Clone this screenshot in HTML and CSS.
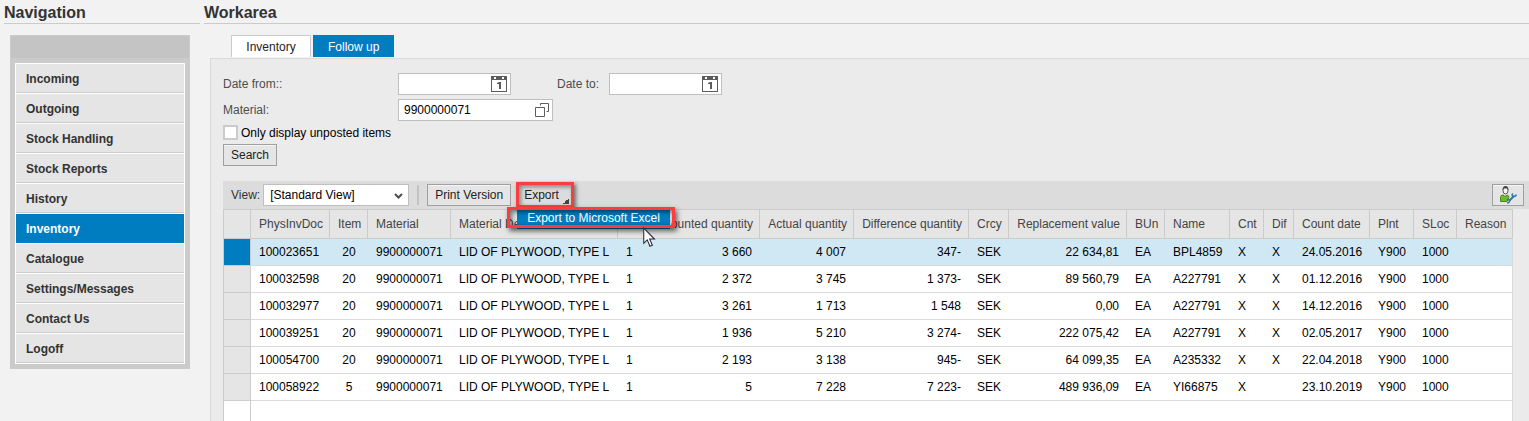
FILE: index.html
```html
<!DOCTYPE html>
<html lang="en">
<head>
    <meta charset="UTF-8">
    <meta name="viewport" content="width=device-width, initial-scale=1.0">
    <title>Inventory - Follow up</title>
    <link rel="stylesheet" href="styles.css">
</head>
<body>
    <div class="page">
        <aside class="navigation">
            <h2 class="heading">Navigation</h2>
            <nav class="nav-box">
                <div class="nav-top"></div>
                <ul class="nav-list">
                    <li><a href="#">Incoming</a></li>
                    <li><a href="#">Outgoing</a></li>
                    <li><a href="#">Stock Handling</a></li>
                    <li><a href="#">Stock Reports</a></li>
                    <li><a href="#">History</a></li>
                    <li><a href="#" class="active">Inventory</a></li>
                    <li><a href="#">Catalogue</a></li>
                    <li><a href="#">Settings/Messages</a></li>
                    <li><a href="#">Contact Us</a></li>
                    <li><a href="#">Logoff</a></li>
                </ul>
            </nav>
        </aside>

        <main class="workarea">
            <h2 class="heading">Workarea</h2>
            <div class="tabs">
                <button type="button" class="tab">Inventory</button>
                <button type="button" class="tab selected">Follow up</button>
            </div>

            <section class="panel">
                <form class="search-form">
                    <div class="form-row">
                        <label class="label-first" for="date-from">Date from::</label>
                        <div class="field field-date">
                            <input type="text" id="date-from">
                            <button type="button" class="field-icon" aria-label="Pick date from">
                                <svg width="16" height="16" viewBox="0 0 16 16">
                                    <path fill="#5c5c5c" fill-rule="evenodd" d="M0 0h16v16H0zM1 4v11h14V4zM3 1v2h2V1zM11 1v2h2V1z"/>
                                    <path fill="#5c5c5c" d="M6 7l2-1h2v7H8V8H6z"/>
                                </svg>
                            </button>
                        </div>
                        <label class="label-second" for="date-to">Date to:</label>
                        <div class="field field-date">
                            <input type="text" id="date-to">
                            <button type="button" class="field-icon" aria-label="Pick date to">
                                <svg width="16" height="16" viewBox="0 0 16 16">
                                    <path fill="#5c5c5c" fill-rule="evenodd" d="M0 0h16v16H0zM1 4v11h14V4zM3 1v2h2V1zM11 1v2h2V1z"/>
                                    <path fill="#5c5c5c" d="M6 7l2-1h2v7H8V8H6z"/>
                                </svg>
                            </button>
                        </div>
                    </div>
                    <div class="form-row">
                        <label class="label-first" for="material">Material:</label>
                        <div class="field field-material">
                            <input type="text" id="material" value="9900000071">
                            <button type="button" class="field-icon" aria-label="Value help">
                                <svg width="16" height="16" viewBox="0 0 16 16" fill="none" stroke="#5c5c5c">
                                    <path d="M2.500 5.500h9v9h-9zM7.500 3.500v-2h8v8h-2"/>
                                </svg>
                            </button>
                        </div>
                    </div>
                    <div class="check-row">
                        <input type="checkbox" id="unposted">
                        <label for="unposted">Only display unposted items</label>
                    </div>
                    <button type="button" class="btn">Search</button>
                </form>

                <div class="toolbar">
                    <label for="view">View:</label>
                    <div class="select-wrap">
                        <select id="view">
                            <option>[Standard View]</option>
                        </select>
                        <svg class="chevron" width="9" height="6" viewBox="0 0 9 6" fill="none" stroke="#4d4d4d" stroke-width="2">
                            <path d="M1 1l3.500 3.500L8 1"/>
                        </svg>
                    </div>
                    <span class="separator"></span>
                    <button type="button" class="btn">Print Version</button>
                    <div class="export">
                        <button type="button" class="export-btn">Export</button>
                        <div class="export-menu">
                            <button type="button" class="menu-item">Export to Microsoft Excel</button>
                        </div>
                        <svg class="cursor" width="14" height="21" viewBox="0 0 13 20">
                            <path fill="#fff" stroke="#26263a" d="M1.500 1v14.500l3.300-3.200 2.600 6 2.300-1-2.600-5.800h4.600z"/>
                        </svg>
                    </div>
                    <button type="button" class="btn settings" aria-label="Settings">
                        <svg width="18" height="18" viewBox="0 0 18 18">
                            <path fill="#76b82a" stroke="#3f8a1a" d="M1.500 15.500v-4c0-1.500 1-2.500 2.500-2.500l2 1.500L8.500 9l1.500 2-2 4.500z"/>
                            <ellipse cx="6.500" cy="4.500" rx="2.500" ry="3.500" fill="#f4f4f4" stroke="#555"/>
                            <path fill="#444" d="M3.500 4.500C3.500 1.500 4.500 0 6.500 0s3 1.500 3 4.500L8.500 2.500h-4z"/>
                            <path fill="none" stroke="#2a78b0" stroke-width="2" d="M10 15l5-5"/>
                            <path fill="none" stroke="#2a78b0" stroke-width="1.500" d="M14 7.500c-1.500 1-1 3 .5 3s2.500-.5 3-2M8 14c1.500-1 3 0 2.500 1.500S9 17 8 17"/>
                        </svg>
                    </button>
                </div>

                <table class="grid">
                    <colgroup>
                        <col class="c-select">
                        <col class="c-doc">
                        <col class="c-item">
                        <col class="c-material">
                        <col class="c-desc">
                        <col class="c-type">
                        <col class="c-counted">
                        <col class="c-actual">
                        <col class="c-diff">
                        <col class="c-crcy">
                        <col class="c-value">
                        <col class="c-bun">
                        <col class="c-name">
                        <col class="c-cnt">
                        <col class="c-dif">
                        <col class="c-date">
                        <col class="c-plnt">
                        <col class="c-sloc">
                        <col class="c-reason">
                    </colgroup>
                    <thead>
                        <tr>
                            <th></th>
                            <th>PhysInvDoc</th>
                            <th>Item</th>
                            <th>Material</th>
                            <th>Material Desc</th>
                            <th></th>
                            <th class="num">Counted quantity</th>
                            <th class="num">Actual quantity</th>
                            <th class="num">Difference quantity</th>
                            <th>Crcy</th>
                            <th class="num">Replacement value</th>
                            <th>BUn</th>
                            <th>Name</th>
                            <th>Cnt</th>
                            <th>Dif</th>
                            <th>Count date</th>
                            <th>Plnt</th>
                            <th>SLoc</th>
                            <th>Reason</th>
                        </tr>
                    </thead>
                    <tbody>
                        <tr class="selected">
                            <td></td><td>100023651</td><td class="mid">20</td><td>9900000071</td><td>LID OF PLYWOOD, TYPE L</td><td>1</td>
                            <td class="num">3 660</td><td class="num">4 007</td><td class="num">347-</td><td>SEK</td><td class="num">22 634,81</td>
                            <td>EA</td><td>BPL4859</td><td>X</td><td>X</td><td>24.05.2016</td><td>Y900</td><td>1000</td><td></td>
                        </tr>
                        <tr>
                            <td></td><td>100032598</td><td class="mid">20</td><td>9900000071</td><td>LID OF PLYWOOD, TYPE L</td><td>1</td>
                            <td class="num">2 372</td><td class="num">3 745</td><td class="num">1 373-</td><td>SEK</td><td class="num">89 560,79</td>
                            <td>EA</td><td>A227791</td><td>X</td><td>X</td><td>01.12.2016</td><td>Y900</td><td>1000</td><td></td>
                        </tr>
                        <tr>
                            <td></td><td>100032977</td><td class="mid">20</td><td>9900000071</td><td>LID OF PLYWOOD, TYPE L</td><td>1</td>
                            <td class="num">3 261</td><td class="num">1 713</td><td class="num">1 548</td><td>SEK</td><td class="num">0,00</td>
                            <td>EA</td><td>A227791</td><td>X</td><td>X</td><td>14.12.2016</td><td>Y900</td><td>1000</td><td></td>
                        </tr>
                        <tr>
                            <td></td><td>100039251</td><td class="mid">20</td><td>9900000071</td><td>LID OF PLYWOOD, TYPE L</td><td>1</td>
                            <td class="num">1 936</td><td class="num">5 210</td><td class="num">3 274-</td><td>SEK</td><td class="num">222 075,42</td>
                            <td>EA</td><td>A227791</td><td>X</td><td>X</td><td>02.05.2017</td><td>Y900</td><td>1000</td><td></td>
                        </tr>
                        <tr>
                            <td></td><td>100054700</td><td class="mid">20</td><td>9900000071</td><td>LID OF PLYWOOD, TYPE L</td><td>1</td>
                            <td class="num">2 193</td><td class="num">3 138</td><td class="num">945-</td><td>SEK</td><td class="num">64 099,35</td>
                            <td>EA</td><td>A235332</td><td>X</td><td>X</td><td>22.04.2018</td><td>Y900</td><td>1000</td><td></td>
                        </tr>
                        <tr>
                            <td></td><td>100058922</td><td class="mid">5</td><td>9900000071</td><td>LID OF PLYWOOD, TYPE L</td><td>1</td>
                            <td class="num">5</td><td class="num">7 228</td><td class="num">7 223-</td><td>SEK</td><td class="num">489 936,09</td>
                            <td>EA</td><td>YI66875</td><td>X</td><td></td><td>23.10.2019</td><td>Y900</td><td>1000</td><td></td>
                        </tr>
                        <tr class="empty">
                            <td></td><td colspan="18"></td>
                        </tr>
                    </tbody>
                </table>
            </section>
        </main>
    </div>
</body>
</html>
```

FILE: styles.css
```css
*, *::after {
    box-sizing: border-box;
}

html, body {
    margin: 0;
    height: 100%;
    overflow: hidden;
}

body {
    background-color: #f2f2f2;
    font-family: "Liberation Sans", Arial, sans-serif;
    font-size: 12px;
    color: #333;
}

button, input, select {
    font: inherit;
    color: inherit;
    margin: 0;
    padding: 0;
    border: 0;
    border-radius: 0;
}

.page {
    display: flex;
    gap: 4px;
    height: 100%;
    padding-left: 4px;
}

.navigation {
    width: 196px;
    flex: none;
}

.workarea {
    display: flex;
    flex-direction: column;
    flex: 1;
    min-width: 0;
}

.heading {
    flex: none;
    height: 24px;
    margin: 0 0 11px;
    padding-top: 4px;
    border-bottom: 1px solid #cbcbcb;
    font-size: 16px;
    line-height: 18px;
}

/* Left menu */
.nav-box {
    width: 180px;
    margin-left: 6px;
    padding-bottom: 5px;
    background-color: #cbcbcb;
}

.nav-top {
    height: 23px;
    margin-bottom: 5px;
    background-color: #c4c4c4;
    border: 1px solid #cbcbcb;
    border-bottom: 0;
}

.nav-list {
    margin: 0 5px;
    padding: 0;
    list-style: none;
    border: 1px solid #fff;
    border-top: 0;
}

.nav-list a {
    display: block;
    height: 30px;
    padding-left: 10px;
    border-top: 1px solid #fff;
    background-color: #e5e5e5;
    box-shadow: inset 0 -1px #cbcbcb;
    color: #333;
    font-weight: bold;
    line-height: 30px;
    text-decoration: none;
}

.nav-list .active {
    background-color: #007cc0;
    box-shadow: none;
    color: #fff;
}

/* Tabs */
.tabs {
    display: flex;
    gap: 2px;
    padding-left: 27px;
    margin-bottom: 1px;
}

.tab {
    min-width: 80px;
    height: 22px;
    padding: 0 14px;
    background-color: #fff;
    border: 1px solid #cbcbcb;
    border-bottom: 0;
    color: #222;
}

.tab.selected {
    background-color: #007cc0;
    border-color: #007cc0;
    color: #fff;
}

.panel {
    flex: 1;
    min-height: 0;
    margin-left: 6px;
    padding: 14px 0 0 12px;
    background-color: #ebebeb;
    border: 1px solid #dadada;
    border-width: 1px 0 0 1px;
}

/* Search form */
.form-row {
    display: flex;
    align-items: center;
    margin-bottom: 4px;
    color: #4d4d4d;
}

.label-first {
    width: 175px;
}

.label-second {
    width: 98px;
    padding-left: 46px;
}

.field {
    display: flex;
    align-items: center;
    height: 22px;
    padding: 0 3px 0 5px;
    background-color: #fff;
    border: 1px solid #bfbfbf;
}

.field-date {
    width: 113px;
}

.field-material {
    width: 155px;
}

.field input {
    flex: 1;
    min-width: 0;
    background: none;
    color: #000;
    outline: 0;
}

.field-icon {
    display: flex;
    background: none;
}

.check-row {
    display: flex;
    align-items: center;
    gap: 3px;
    height: 15px;
    margin-bottom: 4px;
    color: #000;
}

.check-row input {
    appearance: none;
    width: 15px;
    height: 15px;
    background-color: #fff;
    border: 2px solid #cbcbcb;
}

.btn {
    height: 22px;
    padding: 0 7px;
    background-color: #e5e5e5;
    border: 1px solid #a0a0a0;
    box-shadow: inset 0 1px #f5f5f5;
    color: #222;
}

/* Grid toolbar */
.toolbar {
    display: flex;
    align-items: center;
    height: 28px;
    margin-top: 15px;
    padding: 0 5px 0 8px;
    background-color: #dcdcdc;
}

.select-wrap {
    position: relative;
    margin-left: 3px;
}

.select-wrap select {
    appearance: none;
    display: block;
    width: 146px;
    height: 22px;
    padding-left: 6px;
    background-color: #fff;
    border: 1px solid #bfbfbf;
    color: #000;
}

.chevron {
    position: absolute;
    top: 9px;
    right: 6px;
    pointer-events: none;
}

.separator {
    width: 2px;
    height: 20px;
    margin: 0 8px;
    background-color: #c3c3c3;
}

.export {
    position: relative;
    margin-left: 5px;
}

.export-btn {
    display: block;
    width: 58px;
    height: 26px;
    padding-left: 5px;
    background: linear-gradient(135deg, transparent 50%, #444 50%) no-repeat 44px 13px / 6px 6px;
    border: 3px solid #fa3e3e;
    box-shadow: 2px 2px 4px rgba(0, 0, 0, 0.5), inset 2px 2px 4px rgba(0, 0, 0, 0.4);
    color: #222;
    text-align: left;
}

.export-menu {
    position: absolute;
    top: 27px;
    left: 1px;
    z-index: 2;
}

/* Highlight frame, wider than the menu itself */
.export-menu::after {
    content: "";
    position: absolute;
    top: -2px;
    left: -10px;
    width: 168px;
    height: 21px;
    border: 3px solid #fa3e3e;
    box-shadow: 2px 3px 5px rgba(0, 0, 0, 0.6), inset 2px 2px 5px rgba(0, 0, 0, 0.5);
    pointer-events: none;
}

.menu-item {
    display: block;
    width: 153px;
    height: 20px;
    padding: 0 0 2px 10px;
    background-color: #007cc0;
    color: #fff;
    text-align: left;
    white-space: nowrap;
}

.cursor {
    position: absolute;
    top: 45px;
    left: 126px;
    z-index: 3;
}

.settings {
    display: flex;
    align-items: center;
    margin-left: auto;
    padding: 0 6px;
}

/* Result list */
.grid {
    table-layout: fixed;
    width: 1290px;
    border-collapse: separate;
    border-spacing: 0;
    border-left: 1px solid #cbcbcb;
    background-color: #fff;
    color: #000;
    white-space: nowrap;
}

.c-select { width: 27px; }
.c-doc { width: 79px; }
.c-item { width: 38px; }
.c-material { width: 83px; }
.c-desc { width: 167px; }
.c-type { width: 28px; }
.c-counted { width: 114px; }
.c-actual { width: 94px; }
.c-diff { width: 115px; }
.c-crcy { width: 40px; }
.c-value { width: 118px; }
.c-bun { width: 38px; }
.c-name { width: 65px; }
.c-cnt { width: 34px; }
.c-dif { width: 30px; }
.c-date { width: 76px; }
.c-plnt { width: 44px; }
.c-sloc { width: 43px; }
.c-reason { width: 56px; }

.grid th {
    height: 30px;
    padding: 0 0 0 8px;
    background-color: #e5e5e5;
    border: 1px solid #cbcbcb;
    border-left: 0;
    color: #444;
    font-weight: normal;
    text-align: left;
}

.grid td {
    height: 27px;
    padding: 0 0 0 8px;
    border-bottom: 1px solid #dadada;
}

.grid td:first-child {
    background-color: #e5e5e5;
    border-right: 1px solid #cbcbcb;
    border-bottom-color: #cbcbcb;
}

.grid td:last-child {
    border-right: 1px solid #dadada;
}

.grid .num {
    padding: 0 6px 0 0;
    text-align: right;
}

.grid td.num {
    padding-right: 8px;
}

.grid td.mid {
    padding: 0;
    text-align: center;
}

.grid .selected td {
    background-color: #d0e8f4;
}

.grid .selected td:first-child {
    background-color: #007cc0;
}

.grid .empty td,
.grid .empty td:first-child {
    background-color: #fff;
    border-bottom: 0;
}
```
